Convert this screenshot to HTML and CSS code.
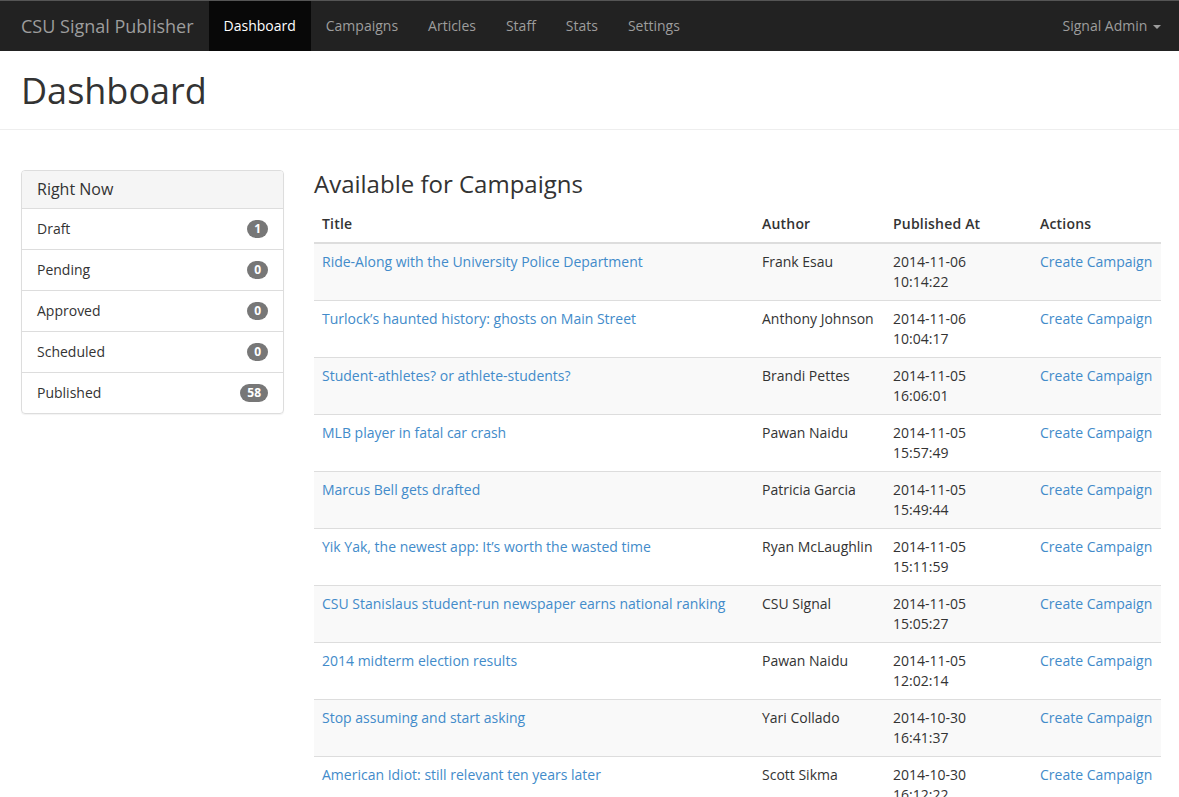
FILE: index.html
```html
<!DOCTYPE html>
<html lang="en">
<head>
<meta charset="utf-8">
<title>Dashboard - CSU Signal Publisher</title>
<link rel="stylesheet" href="styles.css">
</head>
<body>
<nav class="navbar">
  <a class="brand" href="#">CSU Signal Publisher</a>
  <ul class="nav">
    <li class="active"><a href="#">Dashboard</a></li>
    <li><a href="#">Campaigns</a></li>
    <li><a href="#">Articles</a></li>
    <li><a href="#">Staff</a></li>
    <li><a href="#">Stats</a></li>
    <li><a href="#">Settings</a></li>
  </ul>
  <a class="user" href="#">Signal Admin <span class="caret"></span></a>
</nav>
<header class="page-header">
  <h1>Dashboard</h1>
</header>
<div class="content">
  <aside class="panel">
    <div class="panel-heading">Right Now</div>
    <ul class="list-group">
      <li class="list-item">Draft <span class="badge">1</span></li>
      <li class="list-item">Pending <span class="badge">0</span></li>
      <li class="list-item">Approved <span class="badge">0</span></li>
      <li class="list-item">Scheduled <span class="badge">0</span></li>
      <li class="list-item">Published <span class="badge">58</span></li>
    </ul>
  </aside>
  <main class="main">
    <h3 class="section-title">Available for Campaigns</h3>
    <table class="table">
      <colgroup>
        <col class="c-title"><col class="c-author"><col class="c-date"><col class="c-actions">
      </colgroup>
      <thead>
        <tr><th>Title</th><th>Author</th><th>Published At</th><th>Actions</th></tr>
      </thead>
      <tbody>
        <tr><td><a href="#">Ride-Along with the University Police Department</a></td><td>Frank Esau</td><td>2014-11-06<br>10:14:22</td><td><a href="#">Create Campaign</a></td></tr>
        <tr><td><a href="#">Turlock’s haunted history: ghosts on Main Street</a></td><td>Anthony Johnson</td><td>2014-11-06<br>10:04:17</td><td><a href="#">Create Campaign</a></td></tr>
        <tr><td><a href="#">Student-athletes? or athlete-students?</a></td><td>Brandi Pettes</td><td>2014-11-05<br>16:06:01</td><td><a href="#">Create Campaign</a></td></tr>
        <tr><td><a href="#">MLB player in fatal car crash</a></td><td>Pawan Naidu</td><td>2014-11-05<br>15:57:49</td><td><a href="#">Create Campaign</a></td></tr>
        <tr><td><a href="#">Marcus Bell gets drafted</a></td><td>Patricia Garcia</td><td>2014-11-05<br>15:49:44</td><td><a href="#">Create Campaign</a></td></tr>
        <tr><td><a href="#">Yik Yak, the newest app: It’s worth the wasted time</a></td><td>Ryan McLaughlin</td><td>2014-11-05<br>15:11:59</td><td><a href="#">Create Campaign</a></td></tr>
        <tr><td><a href="#">CSU Stanislaus student-run newspaper earns national ranking</a></td><td>CSU Signal</td><td>2014-11-05<br>15:05:27</td><td><a href="#">Create Campaign</a></td></tr>
        <tr><td><a href="#">2014 midterm election results</a></td><td>Pawan Naidu</td><td>2014-11-05<br>12:02:14</td><td><a href="#">Create Campaign</a></td></tr>
        <tr><td><a href="#">Stop assuming and start asking</a></td><td>Yari Collado</td><td>2014-10-30<br>16:41:37</td><td><a href="#">Create Campaign</a></td></tr>
        <tr><td><a href="#">American Idiot: still relevant ten years later</a></td><td>Scott Sikma</td><td>2014-10-30<br>16:12:22</td><td><a href="#">Create Campaign</a></td></tr>
      </tbody>
    </table>
  </main>
</div>
</body>
</html>
```
FILE: styles.css
```css
* { box-sizing: border-box; }
html, body { margin: 0; padding: 0; }
body {
  font-family: "Open Sans", "Helvetica Neue", Arial, sans-serif;
  font-size: 14px;
  line-height: 20px;
  color: #333;
  background: #fff;
}
a { color: #428bca; text-decoration: none; }

.navbar {
  display: flex;
  align-items: stretch;
  height: 51px;
  background: #222;
  border-top: 1px solid #555;
  padding: 0 18px 0 6px;
}
.brand {
  color: #9d9d9d;
  font-size: 18px;
  line-height: 50px;
  padding: 0 15px;
}
.nav {
  list-style: none;
  margin: 0;
  padding: 0;
  display: flex;
}
.nav a {
  display: block;
  color: #9d9d9d;
  line-height: 50px;
  padding: 0 15px;
}
.nav .active a { background: #080808; color: #fff; }
.user {
  margin-left: auto;
  color: #9d9d9d;
  line-height: 50px;
}
.caret {
  display: inline-block;
  width: 0; height: 0;
  margin-left: 2px;
  vertical-align: middle;
  border-top: 4px solid;
  border-left: 4px solid transparent;
  border-right: 4px solid transparent;
}

.page-header {
  border-bottom: 1px solid #eee;
  padding: 0 21px;
  height: 79px;
}
.page-header h1 {
  margin: 0;
  font-size: 36px;
  font-weight: 400;
  line-height: 80px;
}

.content {
  display: flex;
  gap: 30px;
  padding: 40px 18px 0 21px;
  align-items: flex-start;
}
.panel {
  width: 263px;
  flex: none;
  border: 1px solid #ddd;
  border-radius: 4px;
  box-shadow: 0 1px 1px rgba(0,0,0,.05);
}
.panel-heading {
  background: #f5f5f5;
  border-bottom: 1px solid #ddd;
  border-radius: 3px 3px 0 0;
  padding: 8px 15px 9px;
  font-size: 16px;
  line-height: 20px;
}
.list-group { list-style: none; margin: 0; padding: 0; }
.list-item {
  display: flex;
  justify-content: space-between;
  align-items: center;
  padding: 10px 15px;
  border-top: 1px solid #ddd;
}
.list-item:first-child { border-top: 0; padding-top: 10px; }
.badge {
  display: inline-block;
  min-width: 10px;
  padding: 3px 7px;
  font-size: 12px;
  font-weight: 700;
  line-height: 12px;
  color: #fff;
  background: #777;
  border-radius: 10px;
  text-align: center;
}

.main { flex: 1; min-width: 0; }
.section-title {
  margin: 0 0 8px;
  font-size: 24px;
  font-weight: 400;
  line-height: 28px;
}
.table {
  width: 100%;
  border-collapse: collapse;
  table-layout: fixed;
}
.c-title { width: 440px; }
.c-author { width: 131px; }
.c-date { width: 147px; }
.c-actions { width: 129px; }
.table th {
  text-align: left;
  font-weight: 600;
  padding: 8px;
  border-bottom: 2px solid #ddd;
  vertical-align: bottom;
  letter-spacing: .2px;
}
.table td {
  padding: 8px;
  vertical-align: top;
  border-top: 1px solid #ddd;
  white-space: nowrap;
}
.table tbody tr:first-child td { border-top: 0; }
.table tbody tr:nth-child(odd) td { background: #f9f9f9; }
```
